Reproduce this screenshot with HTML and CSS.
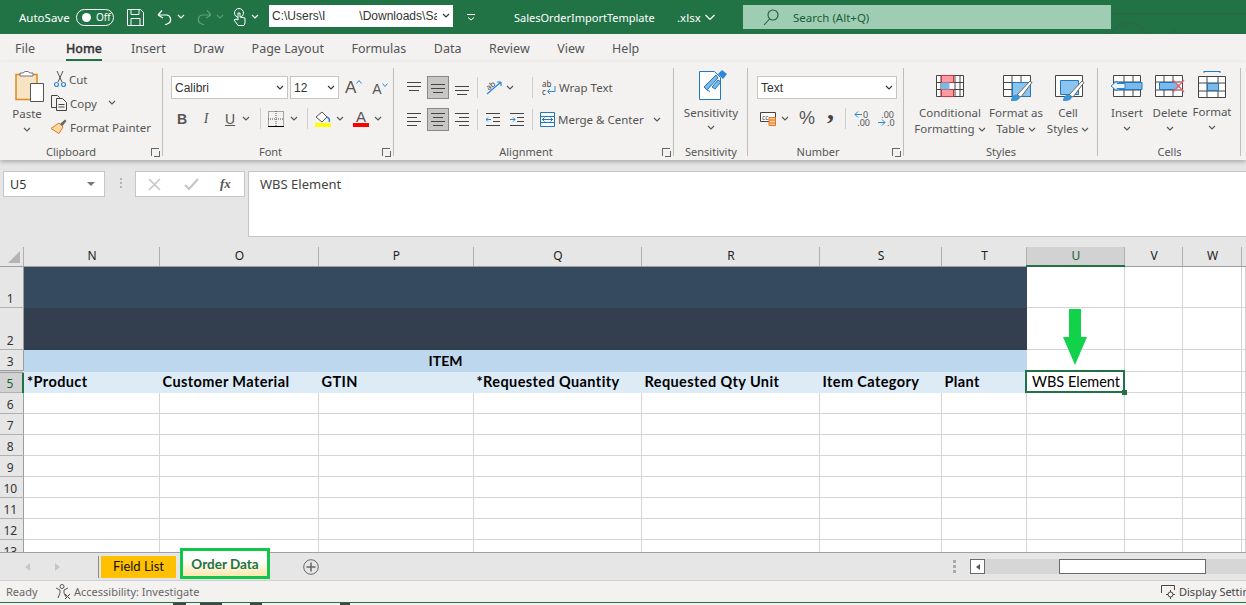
FILE: index.html
```html
<!DOCTYPE html>
<html>
<head>
    <meta charset="UTF-8">
    <title>SalesOrderImportTemplate.xlsx - Excel</title>
    <link rel="stylesheet" href="styles.css">
</head>
<body>
<svg class="defs">
    <defs>
        <path id="chev" d="M1 1l3 3 3-3" fill="none" stroke="currentColor" stroke-width="1.1"/>
    </defs>
</svg>

<!-- title bar -->
<header class="titlebar">
    <span class="autosave">AutoSave</span>
    <span class="toggle"><i></i>Off</span>
    <svg class="qa qa-save" width="17" height="17" viewBox="0 0 17 17" fill="none" stroke="#fff"><path d="M.5.5h13l3 3v13H.5z"/><path d="M4 .5v5h8v-5M4 16.5v-7h9v7"/></svg>
    <svg class="qa qa-undo" width="16" height="16" viewBox="0 0 16 16" fill="none" stroke="#fff" stroke-width="1.2"><path d="M1 6h9a4.5 4.5 0 0 1 1 8.500l-3 1.500M1 6l4-4.500M1 6l5 3"/></svg>
    <svg class="qa-chev" width="8" height="6"><use href="#chev"/></svg>
    <svg class="qa qa-redo" width="16" height="16" viewBox="0 0 16 16" fill="none" stroke="#5f9c7c" stroke-width="1.2"><path d="M15 6H6a4.500 4.500 0 0 0-1 8.500L8 16M15 6l-4-4.500M15 6l-5 3"/></svg>
    <svg class="qa-chev dim" width="8" height="6"><use href="#chev"/></svg>
    <svg class="qa qa-touch" width="14" height="18" viewBox="0 0 14 18" fill="none" stroke="#fff"><circle cx="6" cy="5" r="4.500"/><path d="M4 16l-3-4 2-1 2 1V5h2v4l5 1v5l-1 2.500H5z" fill="#217346"/></svg>
    <svg class="qa-chev" width="8" height="6"><use href="#chev"/></svg>
    <div class="pathbox"><span>C:\Users\I</span><span class="path-rest">\Downloads\Sa</span><svg width="8" height="6"><use href="#chev"/></svg></div>
    <svg class="qa-custom" width="8" height="8" viewBox="0 0 8 8" fill="none" stroke="#fff"><path d="M0 1.500h8M1 4.500l3 2.500 3-2.500"/></svg>
    <span class="filename">SalesOrderImportTemplate</span>
    <span class="fileext">.xlsx</span>
    <svg class="file-chev" width="10" height="7" viewBox="0 0 10 7" fill="none" stroke="#fff" stroke-width="1.200"><path d="M.5 1l4.500 4.500L9.500 1"/></svg>
    <div class="search">
        <svg width="16" height="17" viewBox="0 0 16 17" fill="none" stroke="#1d5c3a" stroke-width="1.100"><circle cx="10" cy="6" r="5"/><path d="M6.500 10L1 16"/></svg>
        <span>Search (Alt+Q)</span>
    </div>
    <svg class="title-art" width="135" height="34" viewBox="0 0 135 34" fill="none" stroke="#2a6a47" stroke-width="2"><path d="M0 14h135"/><circle cx="18" cy="42" r="19"/><path d="M60 34l5-4 5 4h65" stroke-width="1.500"/></svg>
</header>

<!-- tabs -->
<nav class="tabs">
    <span>File</span>
    <span class="on">Home</span>
    <span>Insert</span>
    <span>Draw</span>
    <span>Page Layout</span>
    <span>Formulas</span>
    <span>Data</span>
    <span>Review</span>
    <span>View</span>
    <span>Help</span>
</nav>

<!-- ribbon -->
<section class="ribbon">
    <div class="group g-clip">
        <div class="group-body">
            <div class="bigbtn paste">
                <svg width="30" height="32" viewBox="0 0 30 32"><path d="M1 3.500h21v25H1z" fill="#f8e4c3" stroke="#e08a1e" stroke-width="1.500"/><path d="M5 5h13V2h-3L13 .500h-3L8 2H5z" fill="#fff" stroke="#777"/><path d="M15.500 12.500h13v18h-13z" fill="#fff" stroke="#555"/></svg>
                <span>Paste</span>
                <svg class="chev" width="8" height="6"><use href="#chev"/></svg>
            </div>
            <div class="clip-list">
                <div class="row-item"><svg width="12" height="16" viewBox="0 0 12 16" fill="none"><path d="M3 0l5 11M9 0L4 11" stroke="#555"/><circle cx="2.500" cy="13.500" r="2" stroke="#2b88d8" stroke-width="1.200"/><circle cx="9.500" cy="13.500" r="2" stroke="#2b88d8" stroke-width="1.200"/></svg>Cut</div>
                <div class="row-item"><svg width="16" height="16" viewBox="0 0 16 16" fill="#f3f2f1" stroke="#444"><path d="M.5.500h6l2 2v10h-8z"/><path d="M5.500 3.500h6l4 4v8h-10z"/><path d="M7.500 9.500h6M7.500 12h6"/></svg>Copy<svg class="chev copy-chev" width="8" height="6"><use href="#chev"/></svg></div>
                <div class="row-item"><svg width="16" height="16" viewBox="0 0 16 16"><path d="M8 4l4 4-4 6.500-8-5z" fill="#f9d9a8" stroke="#e07b1a"/><path d="M9 5l5-4.500 1.500 1.500-4 5z" fill="#666"/></svg>Format Painter</div>
            </div>
        </div>
        <div class="group-label">Clipboard<i class="launch"></i></div>
    </div>

    <div class="group g-font">
        <div class="group-body col">
            <div class="tool-row">
                <div class="select font-name">Calibri<svg width="8" height="6"><use href="#chev"/></svg></div>
                <div class="select font-size">12<svg width="8" height="6"><use href="#chev"/></svg></div>
                <span class="size-a big">A<svg width="6" height="4" viewBox="0 0 6 4" fill="none" stroke="#2b88d8"><path d="M.5 3.500l2.500-3 2.500 3"/></svg></span>
                <span class="size-a small">A<svg width="6" height="4" viewBox="0 0 6 4" fill="none" stroke="#2b88d8"><path d="M.5.500l2.500 3 2.500-3"/></svg></span>
            </div>
            <div class="tool-row font-row2">
                <b class="fx b">B</b>
                <i class="fx i">I</i>
                <u class="fx u">U</u>
                <svg class="chev c1" width="8" height="6"><use href="#chev"/></svg>
                <em class="vsep s1"></em>
                <svg class="ic-border" width="16" height="16" viewBox="0 0 16 16" fill="none" stroke="#555" stroke-dasharray="1 1"><path d="M.5.500h15v15H.500zM8 0v16M0 8h16"/><path d="M0 15.500h16" stroke="#000" stroke-dasharray="none"/></svg>
                <svg class="chev c2" width="8" height="6"><use href="#chev"/></svg>
                <em class="vsep s2"></em>
                <span class="paint"><svg width="16" height="12" viewBox="0 0 16 12"><path d="M1 6l6-5 5 5-5 5z" fill="#fff" stroke="#555"/><path d="M12 6c2 1 3 3 2 5" fill="none" stroke="#2b88d8" stroke-width="1.500"/></svg><i class="bar yellow"></i></span>
                <svg class="chev c3" width="8" height="6"><use href="#chev"/></svg>
                <span class="paint color-a">A<i class="bar red"></i></span>
                <svg class="chev c4" width="8" height="6"><use href="#chev"/></svg>
            </div>
        </div>
        <div class="group-label">Font<i class="launch"></i></div>
    </div>

    <div class="group g-align">
        <div class="group-body col">
            <div class="tool-row align-row">
                <span class="al"><svg width="14" height="14" viewBox="0 0 14 14" stroke="#444"><path d="M0 1.500h14M0 5.500h14M2 9.500h10"/></svg></span>
                <span class="al sel"><svg width="14" height="14" viewBox="0 0 14 14" stroke="#444"><path d="M0 3.500h14M0 7.500h14M2 11.500h10"/></svg></span>
                <span class="al"><svg width="14" height="14" viewBox="0 0 14 14" stroke="#444"><path d="M0 5.500h14M0 9.500h14M2 13.500h10"/></svg></span>
                <em class="vsep"></em>
                <svg class="orient" width="17" height="16" viewBox="0 0 17 16" fill="none"><path d="M1 14L15 2M15 2h-4M15 2v4" stroke="#2b88d8" stroke-width="1.200"/><text x="0" y="9" font-size="8" fill="#444" transform="rotate(-40 4 6)">ab</text></svg>
                <svg class="chev" width="8" height="6"><use href="#chev"/></svg>
                <em class="vsep push"></em>
                <span class="row-item wrap"><svg width="14" height="16" viewBox="0 0 14 16" fill="none"><text x="0" y="7" font-size="8" fill="#444">ab</text><text x="0" y="15" font-size="8" fill="#444">c</text><path d="M13 6v5.500H6m2-2.500L5.500 11.500 8 14" stroke="#2b88d8"/></svg>Wrap Text</span>
            </div>
            <div class="tool-row align-row row2">
                <span class="al"><svg width="14" height="14" viewBox="0 0 14 14" stroke="#444"><path d="M0 .500h14M0 4.500h10M0 8.500h14M0 12.500h10"/></svg></span>
                <span class="al sel"><svg width="14" height="14" viewBox="0 0 14 14" stroke="#444"><path d="M0 .500h14M2 4.500h10M0 8.500h14M2 12.500h10"/></svg></span>
                <span class="al"><svg width="14" height="14" viewBox="0 0 14 14" stroke="#444"><path d="M0 .500h14M4 4.500h10M0 8.500h14M4 12.500h10"/></svg></span>
                <em class="vsep"></em>
                <svg class="indent" width="14" height="13" viewBox="0 0 14 13" fill="none" stroke="#444"><path d="M0 .500h14M7 4.500h7M7 8.500h7M0 12.500h14"/><path d="M5 6.500H0m2-2L0 6.500l2 2" stroke="#2b88d8"/></svg>
                <svg class="indent" width="14" height="13" viewBox="0 0 14 13" fill="none" stroke="#444"><path d="M0 .500h14M7 4.500h7M7 8.500h7M0 12.500h14"/><path d="M0 6.500h5m-2-2l2 2-2 2" stroke="#2b88d8"/></svg>
                <em class="vsep push2"></em>
                <span class="row-item merge"><svg width="15" height="15" viewBox="0 0 15 15" fill="#fff" stroke="#1f78c1"><path d="M.5.500h14v14H.500zM0 4.500h15M0 10.500h15"/><path d="M2 7.500h11M4.500 5.500l-2 2 2 2M10.500 5.500l2 2-2 2" fill="none"/></svg>Merge &amp; Center<svg class="chev" width="8" height="6"><use href="#chev"/></svg></span>
            </div>
        </div>
        <div class="group-label">Alignment<i class="launch"></i></div>
    </div>

    <div class="group g-sens">
        <div class="group-body">
            <div class="bigbtn sens">
                <svg width="28" height="30" viewBox="0 0 28 30"><path d="M.5 1.500h15l6 6v22H.500z" fill="#fff" stroke="#1f78c1"/><path d="M5 17L17 5l2 3L8 20zM8 20l3 1.500M13 17l6-7 3 2-6 7z" fill="#7cb9e8" stroke="#1f78c1"/><path d="M19 4l4-4 5 4-4 5z" fill="#2b88d8"/></svg>
                <span>Sensitivity</span>
                <svg class="chev" width="8" height="6"><use href="#chev"/></svg>
            </div>
        </div>
        <div class="group-label nl">Sensitivity</div>
    </div>

    <div class="group g-num">
        <div class="group-body col">
            <div class="tool-row">
                <div class="select num-format">Text<svg width="8" height="6"><use href="#chev"/></svg></div>
            </div>
            <div class="tool-row num-row2">
                <svg width="18" height="15" viewBox="0 0 18 15"><path d="M.5 1.500h15v9H.500z" fill="#fff" stroke="#444"/><text x="2" y="9" font-size="7" fill="#444">cc</text><path d="M9 6.500h6.500v8H9z" fill="#f5c9a0" stroke="#e07b1a"/><path d="M9 9h6M9 12h6" stroke="#e07b1a"/></svg>
                <svg class="chev c1" width="8" height="6"><use href="#chev"/></svg>
                <span class="pct">%</span>
                <span class="comma">,</span>
                <em class="vsep"></em>
                <span class="dec"><svg width="8" height="7" viewBox="0 0 8 7" fill="none" stroke="#2b88d8"><path d="M8 3.500H1m3-3l-3 3 3 3"/></svg><small class="d1">0</small><small class="d2">.00</small></span>
                <span class="dec d-right"><small class="d1">.00</small><svg width="8" height="7" viewBox="0 0 8 7" fill="none" stroke="#2b88d8"><path d="M0 3.500h7m-3-3l3 3-3 3"/></svg><small class="d2">.0</small></span>
            </div>
        </div>
        <div class="group-label">Number<i class="launch"></i></div>
    </div>

    <div class="group g-styles">
        <div class="group-body">
            <div class="bigbtn st-cond">
                <svg width="28" height="22" viewBox="0 0 28 22" stroke="#444" fill="#fff"><path d="M.5.500h27v21H.500zM5 0v22M19 0v22M24 0v22M0 7.500h28M0 14.500h28"/><path d="M5.500.500h12v7h-12zM5.500 14.500h12v7h-12z" fill="#ff9aa2" stroke="#d13438"/><path d="M5.500 7.500h8v7h-8z" fill="#7cb9e8" stroke="none"/></svg>
                <span>Conditional</span>
                <span>Formatting <svg width="8" height="6"><use href="#chev"/></svg></span>
            </div>
            <div class="bigbtn st-table">
                <svg width="30" height="27" viewBox="0 0 30 27" stroke="#444" fill="#fff"><path d="M.5.500h27v21H.500zM9 0v22M18 0v22M0 7.500h28M0 14.500h28"/><path d="M9.500 7.500h18v14h-18z" fill="#8cc4ee" stroke="#1f78c1"/><path d="M14 20l13-14 2 1.500L18 22z" fill="#fff" stroke="#666"/><path d="M8 26c0-4 3-7 6-6l3 2c-1 4-5 4-9 4z" fill="#3d96d8" stroke="none"/></svg>
                <span>Format as</span>
                <span>Table <svg width="8" height="6"><use href="#chev"/></svg></span>
            </div>
            <div class="bigbtn st-cell">
                <svg width="30" height="27" viewBox="0 0 30 27" stroke="#444" fill="#fff"><path d="M.5.500h27v21H.500z"/><path d="M5.500 5.500h18v14h-18z" fill="#8cc4ee" stroke="#1f78c1"/><path d="M14 20l13-14 2 1.500L18 22z" fill="#fff" stroke="#666"/><path d="M8 26c0-4 3-7 6-6l3 2c-1 4-5 4-9 4z" fill="#3d96d8" stroke="none"/></svg>
                <span>Cell</span>
                <span>Styles <svg width="8" height="6"><use href="#chev"/></svg></span>
            </div>
        </div>
        <div class="group-label nl">Styles</div>
    </div>

    <div class="group g-cells">
        <div class="group-body">
            <div class="bigbtn c-ins">
                <svg width="32" height="22" viewBox="0 0 32 22" stroke="#444" fill="#fff"><path d="M2.500.500h27v21h-27zM2 7h28M2 15h28M13 0v22M22 0v22"/><path d="M8 7.500h23v7H8z" fill="#7cb9e8" stroke="#1f78c1"/><path d="M0 11l6-5v2.500h8v5H6V16z" fill="#eef6fc" stroke="#2b88d8"/></svg>
                <span>Insert</span>
                <svg class="chev" width="8" height="6"><use href="#chev"/></svg>
            </div>
            <div class="bigbtn c-del">
                <svg width="30" height="22" viewBox="0 0 30 22" stroke="#444" fill="#fff"><path d="M.5.500h27v21H.500zM0 7h28M0 15h28M9 0v22M18 0v22"/><path d="M4.500 7.500h16l4 3.500-4 3.500h-16z" fill="#7cb9e8" stroke="#1f78c1"/><path d="M18 5l11 12M29 5L18 17" stroke="#f0626a" stroke-width="1.300"/></svg>
                <span>Delete</span>
                <svg class="chev" width="8" height="6"><use href="#chev"/></svg>
            </div>
            <div class="bigbtn c-fmt">
                <svg width="28" height="27" viewBox="0 0 28 27" stroke="#444" fill="#fff"><path d="M6 .500h16M6 0v2M22 0v2" stroke="#1f78c1"/><path d="M.5 5.500h27v21H.500zM0 12h28M0 20h28M9 5v22M20 5v22"/><path d="M9.500 12.500h11v7h-11z" fill="#7cb9e8" stroke="#1f78c1"/></svg>
                <span>Format</span>
                <svg class="chev" width="8" height="6"><use href="#chev"/></svg>
            </div>
        </div>
        <div class="group-label nl">Cells</div>
    </div>
</section>

<!-- formula bar -->
<section class="formula">
    <div class="namebox">U5<i class="tri"></i></div>
    <div class="dots"><i></i><i></i><i></i></div>
    <div class="fbtns">
        <svg width="13" height="13" viewBox="0 0 13 13" stroke="#c4c4c4" stroke-width="1.500"><path d="M1 1l11 11M12 1L1 12"/></svg>
        <svg width="15" height="13" viewBox="0 0 15 13" stroke="#c4c4c4" stroke-width="2" fill="none"><path d="M1 7l4 4 9-10"/></svg>
        <span class="fx-label">fx</span>
    </div>
    <div class="finput">WBS Element</div>
</section>

<!-- sheet grid -->
<div class="grid-wrap">
    <table class="sheet">
        <colgroup>
            <col class="c-rh"><col class="c-n"><col class="c-o"><col class="c-p"><col class="c-q"><col class="c-r"><col class="c-s"><col class="c-t"><col class="c-u"><col class="c-v"><col class="c-w"><col>
        </colgroup>
        <tr class="col-heads">
            <th class="corner"><i></i></th><th>N</th><th>O</th><th>P</th><th>Q</th><th>R</th><th>S</th><th>T</th><th class="col-on">U</th><th>V</th><th>W</th><th></th>
        </tr>
        <tr class="r1"><th class="rh">1</th><td class="dark1" colspan="7"></td><td></td><td></td><td></td><td></td></tr>
        <tr class="r2"><th class="rh">2</th><td class="dark2" colspan="7"></td><td class="arrow-cell"><svg class="arrow" width="24" height="56" viewBox="0 0 24 56"><path d="M6 0h12v28h6L12 56 0 28h6z" fill="#12d14b"/></svg></td><td></td><td></td><td></td></tr>
        <tr class="r3"><th class="rh">3</th><td class="item" colspan="7">ITEM</td><td></td><td></td><td></td><td></td></tr>
        <tr class="r5 heads"><th class="rh rh-on">5</th>
            <td>*Product</td><td>Customer Material</td><td>GTIN</td><td>*Requested Quantity</td><td>Requested Qty Unit</td><td>Item Category</td><td>Plant</td>
            <td class="active">WBS Element<i class="handle"></i></td><td class="plain"></td><td class="plain"></td><td class="plain"></td></tr>
        <tr><th class="rh">6</th><td></td><td></td><td></td><td></td><td></td><td></td><td></td><td></td><td></td><td></td><td></td></tr>
        <tr><th class="rh">7</th><td></td><td></td><td></td><td></td><td></td><td></td><td></td><td></td><td></td><td></td><td></td></tr>
        <tr><th class="rh">8</th><td></td><td></td><td></td><td></td><td></td><td></td><td></td><td></td><td></td><td></td><td></td></tr>
        <tr><th class="rh">9</th><td></td><td></td><td></td><td></td><td></td><td></td><td></td><td></td><td></td><td></td><td></td></tr>
        <tr><th class="rh">10</th><td></td><td></td><td></td><td></td><td></td><td></td><td></td><td></td><td></td><td></td><td></td></tr>
        <tr><th class="rh">11</th><td></td><td></td><td></td><td></td><td></td><td></td><td></td><td></td><td></td><td></td><td></td></tr>
        <tr><th class="rh">12</th><td></td><td></td><td></td><td></td><td></td><td></td><td></td><td></td><td></td><td></td><td></td></tr>
        <tr><th class="rh">13</th><td></td><td></td><td></td><td></td><td></td><td></td><td></td><td></td><td></td><td></td><td></td></tr>
    </table>
</div>

<!-- sheet tabs -->
<footer class="sheetbar">
    <i class="nav left"></i>
    <i class="nav right"></i>
    <em class="tab-sep"></em>
    <div class="sheet-tab orange">Field List</div>
    <div class="sheet-tab current">Order Data</div>
    <svg class="add" width="16" height="16" viewBox="0 0 16 16" fill="none" stroke="#666"><circle cx="8" cy="8" r="7.300"/><path d="M8 3.500v9M3.500 8h9" stroke-width="1.500"/></svg>
    <div class="dots split"><i></i><i></i><i></i></div>
    <div class="hscroll">
        <span class="hs-btn"><i></i></span>
        <span class="hs-thumb"></span>
    </div>
</footer>

<div class="statusbar">
    <span class="ready">Ready</span>
    <svg width="15" height="15" viewBox="0 0 15 15" fill="none" stroke="#555"><circle cx="6" cy="2.500" r="2"/><path d="M0 4l4 2v3l-2 5M12 4L8 6v3l2 4"/><path d="M9 10l5 5M14 10l-5 5" stroke="#444"/></svg>
    <span class="acc">Accessibility: Investigate</span>
    <span class="display"><svg width="15" height="14" viewBox="0 0 15 14" fill="none" stroke="#444"><path d="M.5 8V.500h13V5"/><circle cx="9.500" cy="9.500" r="2.500"/><path d="M9.500 5v2M9.500 12v2M5 9.500h2M12 9.500h2"/></svg>Display Settings</span>
</div>
<div class="under"></div>
</body>
</html>
```

FILE: styles.css
```css
* {
    box-sizing: border-box;
    margin: 0;
    padding: 0;
}
html, body {
    width: 1246px;
    height: 605px;
    overflow: hidden;
}
body {
    font-family: "Noto Sans", "Open Sans", sans-serif;
    font-size: 11.500px;
    color: #444;
    background: #fff;
}
i, em {
    font-style: normal;
}
svg {
    flex: none;
}
.defs {
    display: none;
}

/* title bar */
.titlebar {
    height: 34px;
    background: #217346;
    color: #fff;
    display: flex;
    align-items: center;
    padding-left: 19px;
    position: relative;
}
.autosave {
    width: 57px;
}
.toggle {
    width: 38px;
    height: 17px;
    border: 1px solid #fff;
    border-radius: 9px;
    font-size: 10px;
    display: flex;
    align-items: center;
    gap: 5px;
    padding-left: 5px;
    flex: none;
}
.toggle i {
    width: 9px;
    height: 9px;
    background: #fff;
    border-radius: 50%;
}
.qa-save { margin-left: 13px; }
.qa-undo { margin-left: 13px; }
.qa-chev { margin-left: 4px; color: #fff; }
.qa-chev.dim { color: #5f9c7c; }
.qa-redo { margin-left: 11px; }
.qa-touch { margin-left: 9px; }
.pathbox {
    margin-left: 10px;
    margin-top: -2px;
    width: 184px;
    height: 22px;
    background: #fff;
    color: #333;
    display: flex;
    align-items: center;
    padding: 0 3px;
    font-family: "Liberation Sans", sans-serif;
    font-size: 12px;
    flex: none;
}
.pathbox span {
    white-space: nowrap;
}
.path-rest {
    margin-left: 34px;
    width: 84px;
    overflow: hidden;
}
.pathbox svg {
    margin-left: 5px;
}
.qa-custom { margin-left: 14px; }
.filename { margin-left: 39px; width: 163px; font-size: 11px; flex: none; }
.fileext { width: 28px; font-size: 11.500px; flex: none; }
.search {
    margin-left: 28px;
    width: 368px;
    height: 24px;
    background: #9fcdb3;
    color: #1d5c3a;
    display: flex;
    align-items: center;
    gap: 14px;
    padding-left: 20px;
    align-self: flex-start;
    margin-top: 5px;
    flex: none;
}
.title-art {
    position: absolute;
    left: 1111px;
    top: 0;
}

/* tabs */
.tabs {
    height: 28px;
    background: #f3f2f1;
    display: flex;
    padding-left: 15px;
    line-height: 30px;
    font-size: 12.500px;
    color: #555;
}
.tabs span {
    margin-right: 27.500px;
}
.tabs span:first-child {
    margin-right: 31px;
}
.tabs .on {
    color: #333;
    font-weight: 500;
    position: relative;
    -webkit-text-stroke: .3px #333;
    margin-right: 29px;
}
.tabs .on::after {
    content: "";
    position: absolute;
    left: 0;
    right: 0;
    bottom: 1px;
    height: 2px;
    background: #217346;
}

/* ribbon */
.ribbon {
    height: 98px;
    background: #f3f2f1;
    display: flex;
    box-shadow: 0 2px 4px rgba(0,0,0,.25);
    position: relative;
    z-index: 2;
}
.group {
    display: flex;
    flex-direction: column;
    position: relative;
    flex: none;
}
.group::after {
    content: "";
    position: absolute;
    right: 0;
    top: 6px;
    bottom: 4px;
    width: 1px;
    background: #bdbdbd;
}
.group-body {
    flex: 1;
    display: flex;
    min-height: 0;
}
.group-body.col {
    flex-direction: column;
}
.group-label {
    height: 16px;
    line-height: 16px;
    text-align: center;
    font-size: 11px;
    color: #555;
    padding-right: 16px;
}
.g-clip .group-label {
    padding-right: 21px;
}
.group-label.nl {
    padding-right: 0;
}
.launch {
    position: absolute;
    right: 4px;
    bottom: 4px;
    width: 8px;
    height: 8px;
    border: 1px solid #666;
    border-width: 1px 0 0 1px;
}
.launch::after {
    content: "";
    position: absolute;
    right: -1px;
    bottom: -1px;
    width: 5px;
    height: 5px;
    border-right: 1px solid #666;
    border-bottom: 1px solid #666;
}
.g-clip { width: 163px; }
.g-font { width: 231px; }
.g-align { width: 280px; }
.g-sens { width: 74px; }
.g-num { width: 156px; }
.g-styles { width: 194px; }
.g-cells { width: 143px; }

.bigbtn {
    display: flex;
    flex-direction: column;
    align-items: center;
    flex: none;
    line-height: 16px;
    color: #555;
    white-space: nowrap;
}
.chev {
    color: #555;
    flex: none;
}
.paste {
    width: 44px;
    margin-left: 5px;
    padding-top: 9px;
}
.paste > svg:first-child { margin-left: 5px; }
.paste span { margin-top: 3px; }
.paste .chev { margin-top: 5px; }
.clip-list {
    margin-left: 2px;
    padding-top: 9px;
    display: flex;
    flex-direction: column;
    gap: 8px;
}
.row-item {
    display: flex;
    align-items: center;
    gap: 3px;
    height: 16px;
    color: #555;
    white-space: nowrap;
}
.row-item:first-child { padding-left: 3px; }
.row-item.wrap, .row-item.merge { padding-left: 0; }
.copy-chev { margin-left: 8px; }

.tool-row {
    display: flex;
    align-items: center;
    flex: none;
}
.g-font .tool-row:first-child,
.g-num .tool-row:first-child {
    margin-top: 14px;
}
.select {
    height: 23px;
    background: #fff;
    border: 1px solid #c8c6c4;
    display: flex;
    align-items: center;
    justify-content: space-between;
    padding: 0 3px 0 3px;
    color: #333;
    font-family: "Liberation Sans", sans-serif;
    font-size: 12px;
}
.font-name { width: 117px; margin-left: 8px; }
.font-size { width: 49px; margin-left: 2px; }
.size-a {
    display: flex;
    color: #555;
    font-family: "Liberation Sans", sans-serif;
}
.size-a.big { font-size: 17px; margin-left: 6px; }
.size-a.small { font-size: 14px; margin-left: 10px; padding-top: 2px; }
.size-a svg { margin-top: 2px; }

.font-row2 {
    margin-top: 8px;
    height: 23px;
    position: relative;
}
.fx {
    font-family: "Liberation Sans", sans-serif;
    font-size: 14px;
    color: #555;
    width: 24px;
    text-align: center;
}
.b { margin-left: 7px; }
.i { font-style: italic; font-family: "Liberation Serif", serif; }
.vsep {
    display: block;
    width: 1px;
    height: 21px;
    background: #cfcdcb;
    flex: none;
}
.font-row2 .c1 { margin-left: 0; }
.font-row2 .s1 { margin-left: 10px; }
.ic-border { margin-left: 7px; }
.font-row2 .c2 { margin-left: 6px; }
.font-row2 .s2 { margin-left: 9px; }
.paint {
    margin-left: 7px;
    width: 16px;
    display: flex;
    flex-direction: column;
    align-items: center;
    line-height: 13px;
    font-size: 15px;
    color: #555;
    font-family: "Liberation Sans", sans-serif;
}
.bar {
    display: block;
    width: 16px;
    height: 4px;
    flex: none;
}
.yellow { background: #ff0; }
.red { background: #f00; }
.font-row2 .c3 { margin-left: 5px; }
.color-a { margin-left: 9px; }
.font-row2 .c4 { margin-left: 5px; }

.align-row {
    margin-top: 14px;
    padding-left: 9px;
    height: 23px;
}
.align-row.row2 {
    margin-top: 9px;
}
.al {
    width: 22px;
    height: 23px;
    display: flex;
    align-items: center;
    justify-content: center;
    margin-right: 2px;
    flex: none;
}
.al svg { display: block; }
.al.sel {
    background: #c8c6c4;
    border: 1px solid #8a8886;
}
.al:nth-child(3) { margin-right: 0; }
.align-row .vsep { margin-left: 4px; }
.orient { margin-left: 8px; }
.align-row .chev { margin-left: 3px; }
.align-row .push { margin-left: 18px; }
.wrap { margin-left: 9px; }
.indent { margin-left: 8px; }
.indent + .indent { margin-left: 10px; }
.align-row .push2 { margin-left: 8px; }
.merge { margin-left: 7px; }
.merge .chev { margin-left: 6px; }

.sens {
    width: 74px;
    padding-top: 8px;
}
.sens svg:first-child { margin-left: 3px; margin-bottom: 5px; }
.sens .chev { margin-top: 4px; }

.num-format { width: 140px; margin-left: 9px; }
.num-row2 {
    margin-top: 8px;
    padding-left: 12px;
    height: 23px;
}
.num-row2 .c1 { margin-left: 3px; }
.pct {
    font-size: 18px;
    margin-left: 10px;
    font-family: "Liberation Sans", sans-serif;
    color: #555;
}
.comma {
    font-size: 28px;
    font-weight: 700;
    margin-left: 12px;
    line-height: 14px;
    padding-bottom: 18px;
    font-family: "Liberation Serif", serif;
}
.num-row2 .vsep { margin-left: 11px; }
.dec {
    width: 16px;
    margin-left: 8px;
    display: grid;
    grid-template-columns: 9px 7px;
    font-size: 9px;
    line-height: 8px;
    color: #555;
    align-items: center;
}
.dec small { font-size: 9px; }
.dec .d2 { grid-column: 1 / span 2; text-align: right; }
.d-right .d1 { grid-column: 1 / span 2; text-align: right; }
.d-right .d2 { grid-column: auto; }

.st-cond, .st-table, .st-cell, .c-ins, .c-del, .c-fmt {
    padding-top: 13px;
}
.st-cond > svg { margin-bottom: 8px; }
.st-table > svg, .st-cell > svg { margin-bottom: 3px; }
.st-cond { width: 84px; margin-left: 4px; }
.st-table { width: 54px; margin-left: -3px; }
.st-cell { width: 46px; margin-left: 2px; }
.st-table > svg { margin-left: 4px; }
.st-cell > svg { margin-left: 4px; }
.c-ins { width: 44px; margin-left: 7px; }
.c-del { width: 42px; }
.c-fmt { width: 42px; padding-top: 9px; }
.c-ins > svg, .c-del > svg { margin-bottom: 8px; }
.c-fmt > svg { margin-bottom: 6px; }
.c-ins .chev, .c-del .chev, .c-fmt .chev { margin: 5px 0 0; }

/* formula bar */
.formula {
    height: 87px;
    background: #e6e6e6;
    display: flex;
    padding: 11px 0 10px 3px;
    align-items: flex-start;
}
.namebox {
    width: 102px;
    height: 26px;
    background: #fff;
    border: 1px solid #c6c6c6;
    display: flex;
    align-items: center;
    padding-left: 6px;
    position: relative;
    color: #333;
    font-size: 12.500px;
}
.tri {
    position: absolute;
    right: 9px;
    top: 10px;
    border: 4px solid transparent;
    border-top: 4px solid #777;
}
.dots {
    display: flex;
    flex-direction: column;
    gap: 2px;
    margin: 7px 12px 0 15px;
    width: 3px;
}
.dots i {
    width: 2px;
    height: 2px;
    background: #b4b4b4;
}
.fbtns {
    width: 110px;
    height: 26px;
    background: #fff;
    border: 1px solid #c6c6c6;
    display: flex;
    align-items: center;
    padding-left: 12px;
    gap: 23px;
}
.fx-label {
    font-family: "Liberation Serif", serif;
    font-style: italic;
    font-weight: 700;
    font-size: 13px;
    color: #555;
    margin-left: -2px;
}
.finput {
    margin-left: 3px;
    flex: 1;
    height: 66px;
    background: #fff;
    border: 1px solid #c6c6c6;
    border-right: none;
    padding: 3px 11px;
    font-size: 13px;
    line-height: 18px;
    color: #444;
}

/* grid */
.grid-wrap {
    height: 305px;
    overflow: hidden;
    position: relative;
}
.sheet {
    table-layout: fixed;
    border-collapse: collapse;
    width: 1246px;
    font-family: Lato, sans-serif;
    color: #000;
}
.c-rh { width: 23px; }
.c-n { width: 136px; }
.c-o { width: 159px; }
.c-p { width: 155px; }
.c-q { width: 168px; }
.c-r { width: 178px; }
.c-s { width: 122px; }
.c-t { width: 85px; }
.c-u { width: 98px; }
.c-v { width: 58px; }
.c-w { width: 59px; }
.sheet tr {
    height: 21px;
}
.sheet td {
    border: 1px solid #d4d4d4;
    padding: 0;
    overflow: hidden;
    white-space: nowrap;
}
.col-heads {
    height: 19px !important;
    background: #e6e6e6;
}
.col-heads th {
    font-weight: 400;
    font-size: 12px;
    font-family: "Noto Sans", sans-serif;
    border-right: 1px solid #b0b0b0;
    border-bottom: 1px solid #9e9e9e;
    color: #222;
    line-height: 16px;
    padding-left: 2px;
}
.col-heads th:last-child { border-right: none; }
.col-heads .col-on {
    background: #d2d2d2;
    color: #185c37;
    border-bottom: 2px solid #217346;
}
.corner {
    position: relative;
}
.corner i {
    position: absolute;
    right: 3px;
    bottom: 3px;
    border-left: 12px solid transparent;
    border-bottom: 12px solid #b4b4b4;
}
.rh {
    background: #e6e6e6;
    font-weight: 400;
    font-size: 12px;
    font-family: "Noto Sans", sans-serif;
    color: #333;
    border-right: 1px solid #9e9e9e;
    border-bottom: 1px solid #b0b0b0;
    vertical-align: bottom;
    line-height: 17px;
    text-align: center;
    padding-right: 2px;
}
.rh-on {
    background: #d2d2d2;
    color: #185c37;
    border-right: 2px solid #217346;
}
.r3 .rh {
    border-bottom: 3px double #9e9e9e;
}
.r1 { height: 41px !important; }
.r2 { height: 42px !important; }
.r3 { height: 22px !important; }
.dark1 { background: #354a5f; border-color: #354a5f !important; }
.dark2 { background: #333f4f; border-color: #333f4f !important; }
.item {
    background: #bdd7ee;
    border-color: #bdd7ee !important;
    text-align: center;
    font-weight: 700;
    font-size: 14px;
    padding-right: 158px !important;
}
.heads td {
    background: #ddebf7;
    border-color: #ddebf7;
    font-weight: 700;
    font-size: 14.500px;
    letter-spacing: .4px;
    padding-left: 3px;
    line-height: 20px;
}
.heads td.plain {
    background: #fff;
    border-color: #d4d4d4;
}
.heads td.active {
    background: #fff;
    font-weight: 400;
    letter-spacing: 0;
    text-align: center;
    position: relative;
    overflow: visible;
    outline: 2px solid #217346;
    outline-offset: -1px;
    border-color: #217346;
    padding-left: 2px;
}
.handle {
    position: absolute;
    right: -3px;
    bottom: -3px;
    width: 5px;
    height: 5px;
    background: #217346;
    border: 0;
}
.arrow-cell {
    position: relative;
    overflow: visible !important;
}
.arrow {
    position: absolute;
    left: 36px;
    top: 1px;
    z-index: 3;
}

/* sheet tabs */
.sheetbar {
    height: 28px;
    background: #e6e6e6;
    border-top: 1px solid #a0a0a0;
    display: flex;
    align-items: center;
    position: relative;
    z-index: 3;
}
.nav {
    border: 4px solid transparent;
    flex: none;
}
.nav.left {
    border-right: 5px solid #c6c6c6;
    margin-left: 21px;
}
.nav.right {
    border-left: 5px solid #c6c6c6;
    margin-left: 25px;
}
.tab-sep {
    width: 1px;
    height: 22px;
    background: #8a8a8a;
    margin-left: 34px;
    flex: none;
}
.sheet-tab {
    font-family: Lato, sans-serif;
    font-size: 13px;
    color: #111;
    flex: none;
    text-align: center;
}
.orange {
    margin-left: 2px;
    width: 75px;
    height: 22px;
    line-height: 20px;
    background: #ffc000;
}
.current {
    margin-left: 4px;
    margin-top: -6px;
    width: 90px;
    height: 31px;
    border: 3px solid #12c64b;
    background: linear-gradient(#fff 35%, #fde7ae);
    color: #217346;
    font-weight: 700;
    font-size: 13.500px;
    line-height: 27px;
}
.add { margin-left: 33px; flex: none; }
.dots.split {
    margin: 0 0 0 634px;
    gap: 2px;
}
.dots.split i { width: 3px; height: 3px; background: #aaa; }
.hscroll {
    margin-left: 14px;
    flex: 1;
    height: 15px;
    background: #d6d6d6;
    display: flex;
    align-items: stretch;
}
.hs-btn {
    width: 15px;
    background: #fff;
    border: 1px solid #6a6a6a;
    display: flex;
    align-items: center;
    justify-content: center;
    flex: none;
}
.hs-btn i {
    border: 3px solid transparent;
    border-right: 4px solid #555;
    margin-left: -3px;
}
.hs-thumb {
    margin-left: 74px;
    width: 147px;
    background: #fff;
    border: 1px solid #6a6a6a;
    flex: none;
}

/* status */
.statusbar {
    height: 22px;
    background: #f3f2f1;
    border-top: 1px solid #d0d0d0;
    display: flex;
    align-items: center;
    font-size: 11px;
    color: #666;
    padding-left: 6px;
    white-space: nowrap;
    position: relative;
    z-index: 3;
    overflow: hidden;
}
.statusbar > span { flex: none; }
.ready { width: 32px; }
.statusbar > svg { margin-left: 18px; }
.acc { margin-left: 3px; width: 123px; }
.display {
    display: flex;
    align-items: center;
    gap: 3px;
    margin-left: 964px;
    color: #444;
}
.under {
    height: 3px;
    border-top: 1px solid #217346;
    background:
        linear-gradient(90deg, #f3f2f1 173px, #444 173px, #444 186px, #f3f2f1 186px, #f3f2f1 200px, #444 200px, #444 222px, #f3f2f1 222px, #f3f2f1 250px, #444 250px, #444 262px, #f3f2f1 262px, #f3f2f1 340px, #444 340px, #444 350px, #f3f2f1 350px);
}
```
